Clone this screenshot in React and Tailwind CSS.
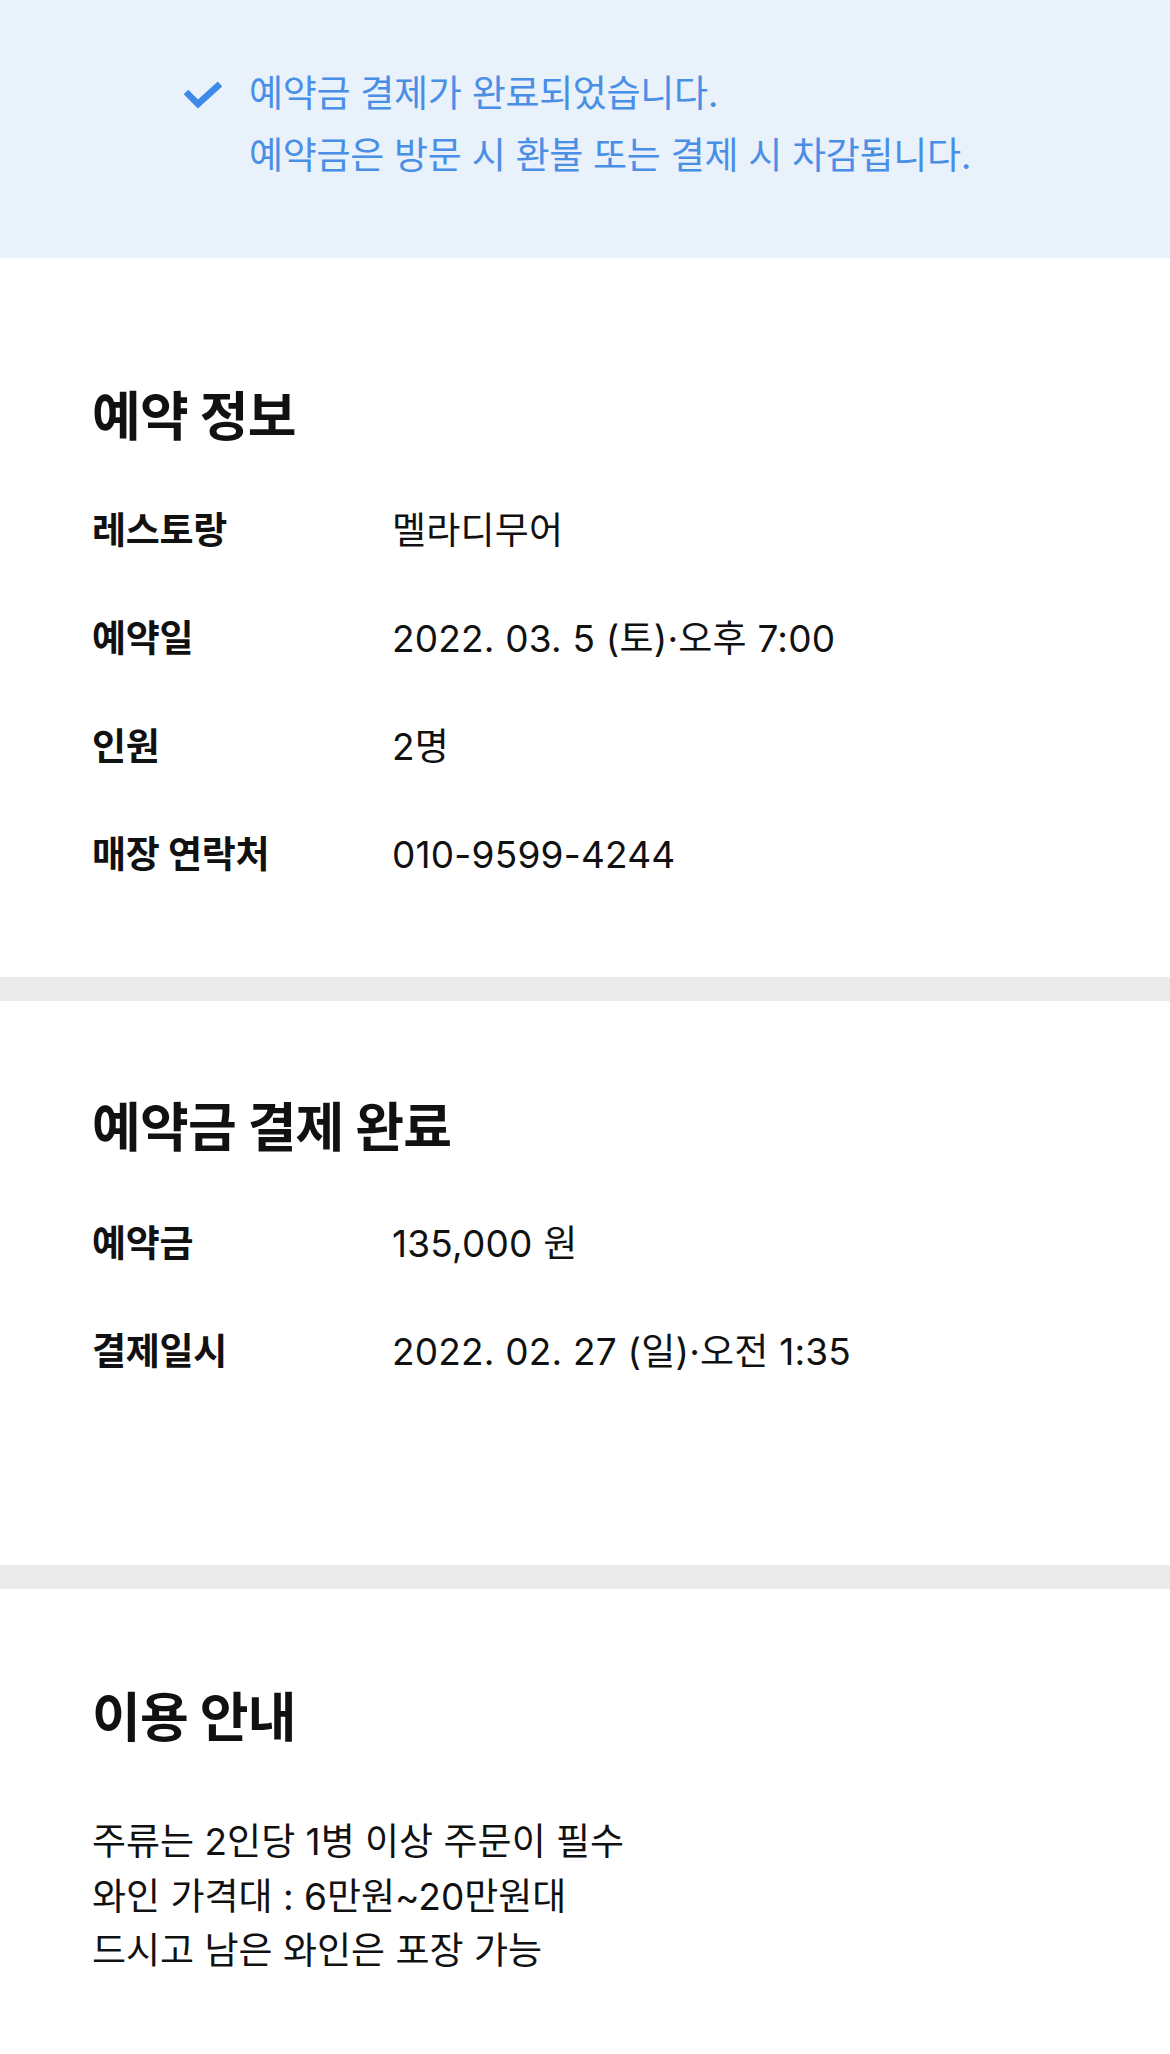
import React from "react";

const FONT = "font-['Inter','Noto_Sans_CJK_KR',sans-serif]";

const reservation = [
  { label: "레스토랑", value: "멜라디무어" },
  { label: "예약일", value: "2022. 03. 5 (토)·오후 7:00" },
  { label: "인원", value: "2명" },
  { label: "매장 연락처", value: "010-9599-4244" },
];

const payment = [
  { label: "예약금", value: "135,000 원" },
  { label: "결제일시", value: "2022. 02. 27 (일)·오전 1:35" },
];

const notices = [
  "주류는 2인당 1병 이상 주문이 필수",
  "와인 가격대 : 6만원~20만원대",
  "드시고 남은 와인은 포장 가능",
];

const CheckIcon = () => (
  <svg width="40" height="28" viewBox="0 0 40 28" fill="none">
    <path
      d="M3 11 L15 23 L37 3"
      stroke="#3d8ae8"
      strokeWidth="6.5"
      strokeLinecap="butt"
      strokeLinejoin="miter"
    />
  </svg>
);

const InfoRow = ({ label, value }) => (
  <div className="flex items-center h-[108px]">
    <div className="w-[300px] shrink-0 font-bold text-[37px] tracking-[-0.3px] text-[#111]">
      {label}
    </div>
    <div className="text-[37px] tracking-[0.2px] text-[#111]">{value}</div>
  </div>
);

const SectionTitle = ({ children }) => (
  <h2 className="text-[53px] leading-[64px] font-bold text-[#111] tracking-[-0.8px]">
    {children}
  </h2>
);

const Divider = () => <div className="h-[24px] bg-[#ebebeb]" />;

export default function App() {
  return (
    <div className={`${FONT} w-[1170px] min-h-screen bg-white`}>
      {/* Banner */}
      <div className="bg-[#e9f1fa] h-[258px] pt-[63px] pl-[183px] flex items-start gap-[26px]">
        <div className="pt-[18px]">
          <CheckIcon />
        </div>
        <div className="text-[#4a8fe6] text-[37px] tracking-[-0.3px] leading-[62px]">
          <p>예약금 결제가 완료되었습니다.</p>
          <p>예약금은 방문 시 환불 또는 결제 시 차감됩니다.</p>
        </div>
      </div>

      {/* 예약 정보 */}
      <section className="px-[92px] pt-[127px] pb-[68px]">
        <SectionTitle>예약 정보</SectionTitle>
        <div className="mt-[28px]">
          {reservation.map((r) => (
            <InfoRow key={r.label} {...r} />
          ))}
        </div>
      </section>

      <Divider />

      {/* 예약금 결제 완료 */}
      <section className="px-[92px] pt-[95px] pb-[159px]">
        <SectionTitle>예약금 결제 완료</SectionTitle>
        <div className="mt-[30px]">
          {payment.map((r) => (
            <InfoRow key={r.label} {...r} />
          ))}
        </div>
      </section>

      <Divider />

      {/* 이용 안내 */}
      <section className="px-[92px] pt-[97px] pb-[75px]">
        <SectionTitle>이용 안내</SectionTitle>
        <div className="mt-[65px] text-[37px] tracking-[0px] leading-[54.5px] text-[#111]">
          {notices.map((n) => (
            <p key={n}>{n}</p>
          ))}
        </div>
      </section>
    </div>
  );
}
